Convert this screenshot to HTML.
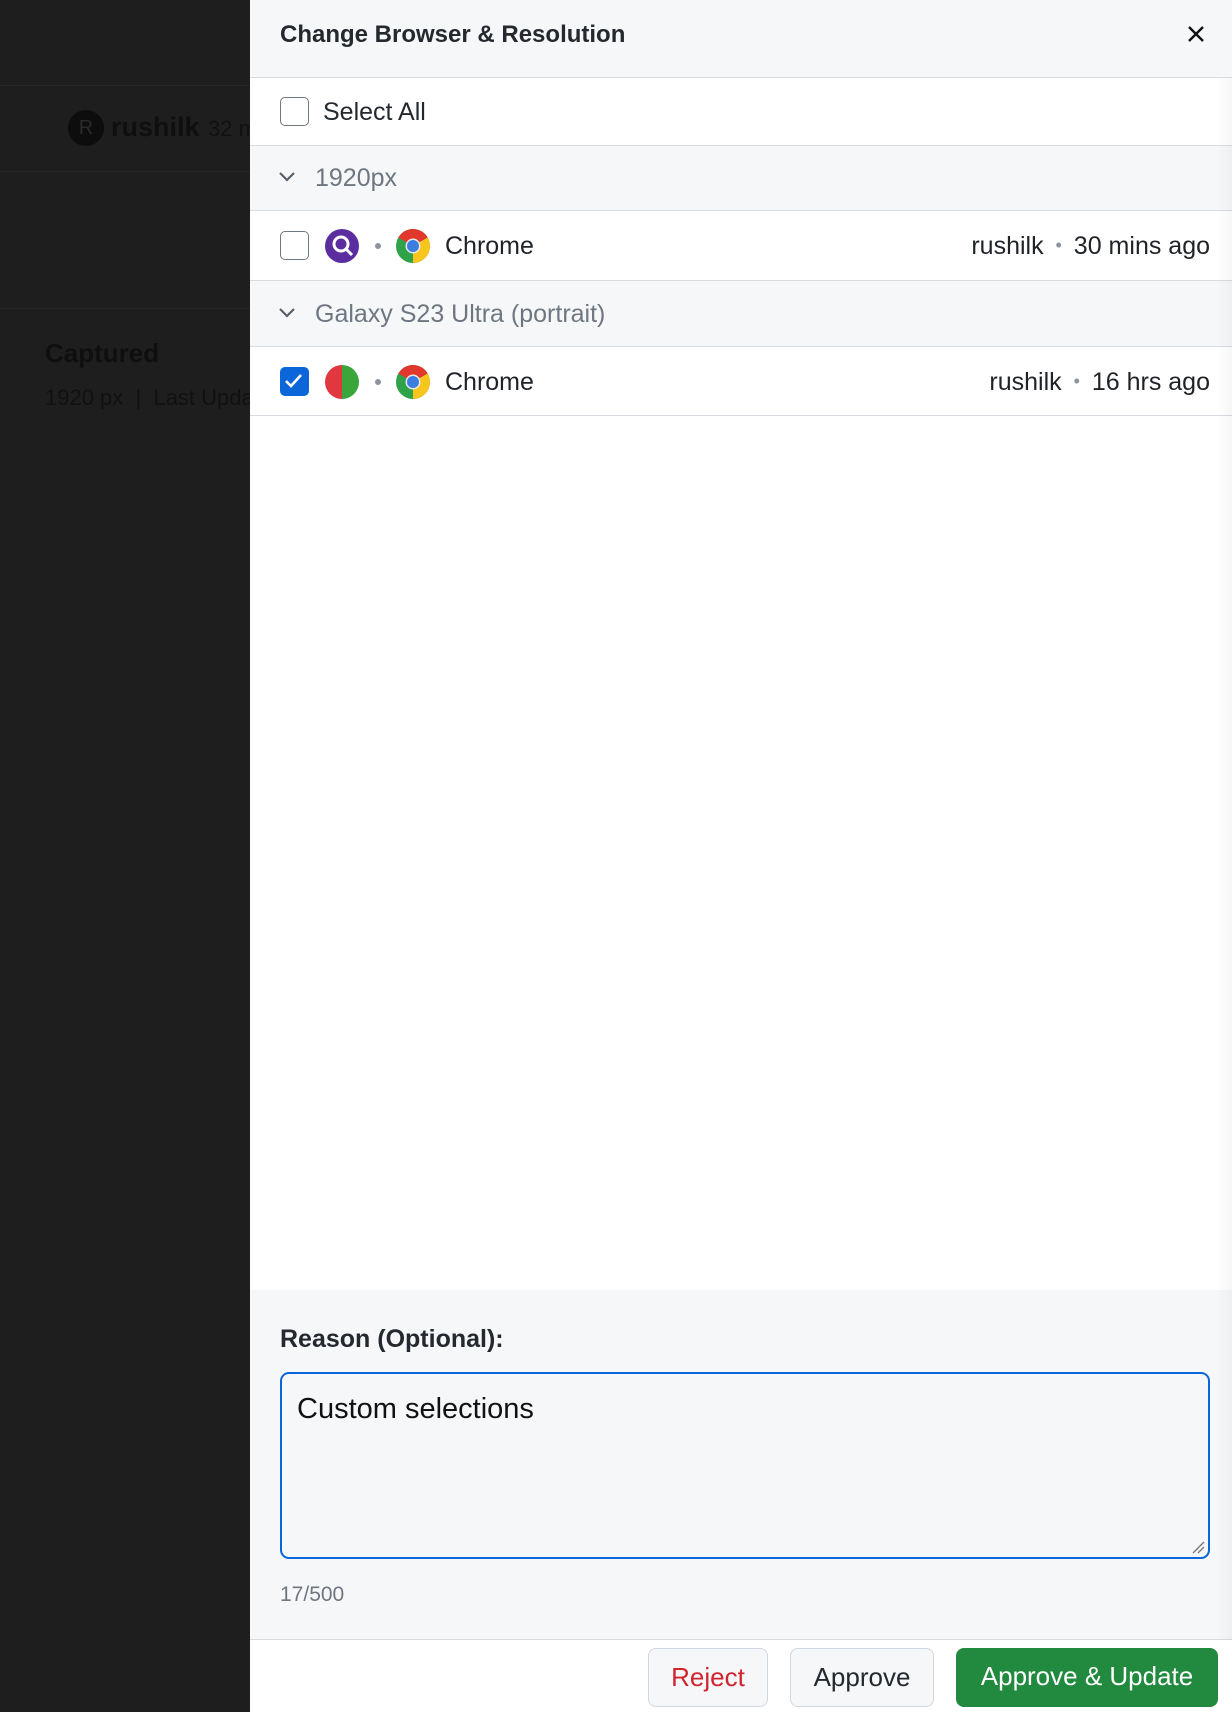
<!DOCTYPE html>
<html><head><style>
*{box-sizing:border-box;margin:0;padding:0}
body{width:1232px;height:1712px;overflow:hidden;font-family:"Liberation Sans",sans-serif;background:#1e1e1e;position:relative;color:#1f2328}
.bg{position:absolute;left:0;top:0;width:250px;height:1712px;background:#1e1e1e;overflow:hidden;white-space:nowrap}
.panel{position:absolute;left:250px;top:0;width:982px;height:1712px;background:#fff;white-space:nowrap}
.hdr{position:absolute;left:0;top:0;width:982px;height:78px;background:#f6f7f9;border-bottom:1px solid #d8dbe0}
.hdr .t{position:absolute;left:30px;top:21px;font-size:24px;font-weight:bold;color:#24292f}
.row{position:absolute;left:0;width:982px;border-bottom:1px solid #d8dbe0}
.cb{position:absolute;left:30px;width:29px;height:29px;border:1.5px solid #6e7781;border-radius:5px;background:#fff}
.txt{position:absolute;font-size:25px}
.grp{background:#f6f7f9}
.dot{position:absolute;width:6px;height:6px;border-radius:3px;background:#8c959f}
.btn{position:absolute;top:1648px;height:59px;border-radius:8px;font-size:26px;text-align:center;line-height:57px}
</style></head><body>
<div class="bg">
 <div style="position:absolute;left:0;top:85px;width:250px;height:1px;background:#262626"></div>
 <div style="position:absolute;left:0;top:171px;width:250px;height:1px;background:#262626"></div>
 <div style="position:absolute;left:68px;top:110px;width:36px;height:36px;border-radius:18px;background:#0d0d0d;color:#2a2a2a;font-size:20px;text-align:center;line-height:36px">R</div>
 <div style="position:absolute;left:111px;top:112px;font-size:27px;color:#0f0f0f;font-weight:bold">rushilk</div>
 <div style="position:absolute;left:208px;top:116px;font-size:22px;color:#111">32 m</div>
 <div style="position:absolute;left:0;top:308px;width:250px;height:1px;background:#262626"></div>
 <div style="position:absolute;left:45px;top:338px;font-size:26px;color:#0f0f0f;font-weight:bold">Captured</div>
 <div style="position:absolute;left:45px;top:385px;font-size:22px;color:#111">1920 px &nbsp;| &nbsp;Last Upda</div>
</div>
<div class="panel">
 <div class="hdr"><div class="t">Change Browser &amp; Resolution</div>
  <svg style="position:absolute;left:936px;top:24px" width="20" height="20" viewBox="0 0 20 20"><path d="M3 3L17 17M17 3L3 17" stroke="#111" stroke-width="2.4"/></svg></div>
 <div class="row" style="top:78px;height:68px"><div class="cb" style="top:19px"></div><div class="txt" style="left:73px;top:20px;color:#24292f">Select All</div></div>
 <div class="row grp" style="top:146px;height:65px">
  <svg style="position:absolute;left:28px;top:24px" width="18" height="14" viewBox="0 0 18 14"><path d="M2 3l7 7 7-7" fill="none" stroke="#57606a" stroke-width="2.2"/></svg>
  <div class="txt" style="left:65px;top:18px;color:#6e7781">1920px</div></div>
 <div class="row" style="top:211px;height:70px"><div class="cb" style="top:20px"></div>
  <svg style="position:absolute;left:74px;top:17px" width="36" height="36" viewBox="0 0 36 36"><circle cx="18" cy="18" r="17" fill="#5b2d9e"/><circle cx="17" cy="16" r="7" fill="none" stroke="#fff" stroke-width="3"/><path d="M22 21l6 6" stroke="#fff" stroke-width="3"/></svg>
  <div class="dot" style="left:125px;top:32px"></div>
  <svg style="position:absolute;left:145px;top:17px" width="36" height="36" viewBox="0 0 36 36"><circle cx="18" cy="18" r="17" fill="#2fa24a"/><path d="M18 18L3.3 9.5A17 17 0 0 1 32.7 9.5Z" fill="#e2372d"/><path d="M18 18L32.7 9.5A17 17 0 0 1 18 35Z" fill="#f7c51b"/><circle cx="18" cy="18" r="7.5" fill="#e8e8e8"/><circle cx="18" cy="18" r="6" fill="#3b7de0"/></svg>
  <div class="txt" style="left:195px;top:21px">Chrome</div>
  <div class="txt" style="right:22px;top:21px">rushilk <span style="color:#8c959f;font-size:18px;position:relative;top:-3px">&nbsp;•&nbsp;</span> 30 mins ago</div></div>
 <div class="row grp" style="top:281px;height:66px">
  <svg style="position:absolute;left:28px;top:25px" width="18" height="14" viewBox="0 0 18 14"><path d="M2 3l7 7 7-7" fill="none" stroke="#57606a" stroke-width="2.2"/></svg>
  <div class="txt" style="left:65px;top:19px;color:#6e7781">Galaxy S23 Ultra (portrait)</div></div>
 <div class="row" style="top:347px;height:69px">
  <div class="cb" style="top:20px;background:#0b66d9;border-color:#0b66d9"><svg width="26" height="26" viewBox="0 0 26 26" style="position:absolute;left:0;top:0"><path d="M5 13l5 5 10-11" fill="none" stroke="#fff" stroke-width="2.6"/></svg></div>
  <svg style="position:absolute;left:74px;top:17px" width="36" height="36" viewBox="0 0 36 36"><path d="M18 1A17 17 0 0 0 18 35Z" fill="#e0383e"/><path d="M18 1A17 17 0 0 1 18 35Z" fill="#3aa53a"/></svg>
  <div class="dot" style="left:125px;top:32px"></div>
  <svg style="position:absolute;left:145px;top:17px" width="36" height="36" viewBox="0 0 36 36"><circle cx="18" cy="18" r="17" fill="#2fa24a"/><path d="M18 18L3.3 9.5A17 17 0 0 1 32.7 9.5Z" fill="#e2372d"/><path d="M18 18L32.7 9.5A17 17 0 0 1 18 35Z" fill="#f7c51b"/><circle cx="18" cy="18" r="7.5" fill="#e8e8e8"/><circle cx="18" cy="18" r="6" fill="#3b7de0"/></svg>
  <div class="txt" style="left:195px;top:21px">Chrome</div>
  <div class="txt" style="right:22px;top:21px">rushilk <span style="color:#8c959f;font-size:18px;position:relative;top:-3px">&nbsp;•&nbsp;</span> 16 hrs ago</div></div>
 <div style="position:absolute;left:0;top:1290px;width:982px;height:350px;background:#f6f7f9;border-bottom:1px solid #d8dbe0">
  <div style="position:absolute;left:30px;top:35px;font-size:25px;font-weight:bold;color:#24292f">Reason (Optional):</div>
  <div style="position:absolute;left:30px;top:82px;width:930px;height:187px;border:2.5px solid #0b66d9;border-radius:9px;background:#f6f7f9">
   <div style="position:absolute;left:15px;top:19px;font-size:29px;color:#111">Custom selections</div>
   <svg style="position:absolute;right:3px;bottom:3px" width="14" height="14" viewBox="0 0 14 14"><path d="M2 13L13 2M7 13L13 7" stroke="#777" stroke-width="1.3"/></svg></div>
  <div style="position:absolute;left:30px;top:293px;font-size:21px;color:#6e7781">17/500</div>
 </div>
 <div class="btn" style="left:398px;width:120px;border:1px solid #d0d7de;background:#f6f7f9;color:#d1242f">Reject</div>
 <div class="btn" style="left:540px;width:144px;border:1px solid #d0d7de;background:#f6f7f9;color:#24292f">Approve</div>
 <div class="btn" style="left:706px;width:262px;background:#218a3e;color:#fff">Approve &amp; Update</div>
 <div style="position:absolute;right:0;top:78px;width:16px;height:1562px;background:linear-gradient(to right,rgba(0,0,0,0),rgba(0,0,0,0.03))"></div>
</div>
</body></html>
